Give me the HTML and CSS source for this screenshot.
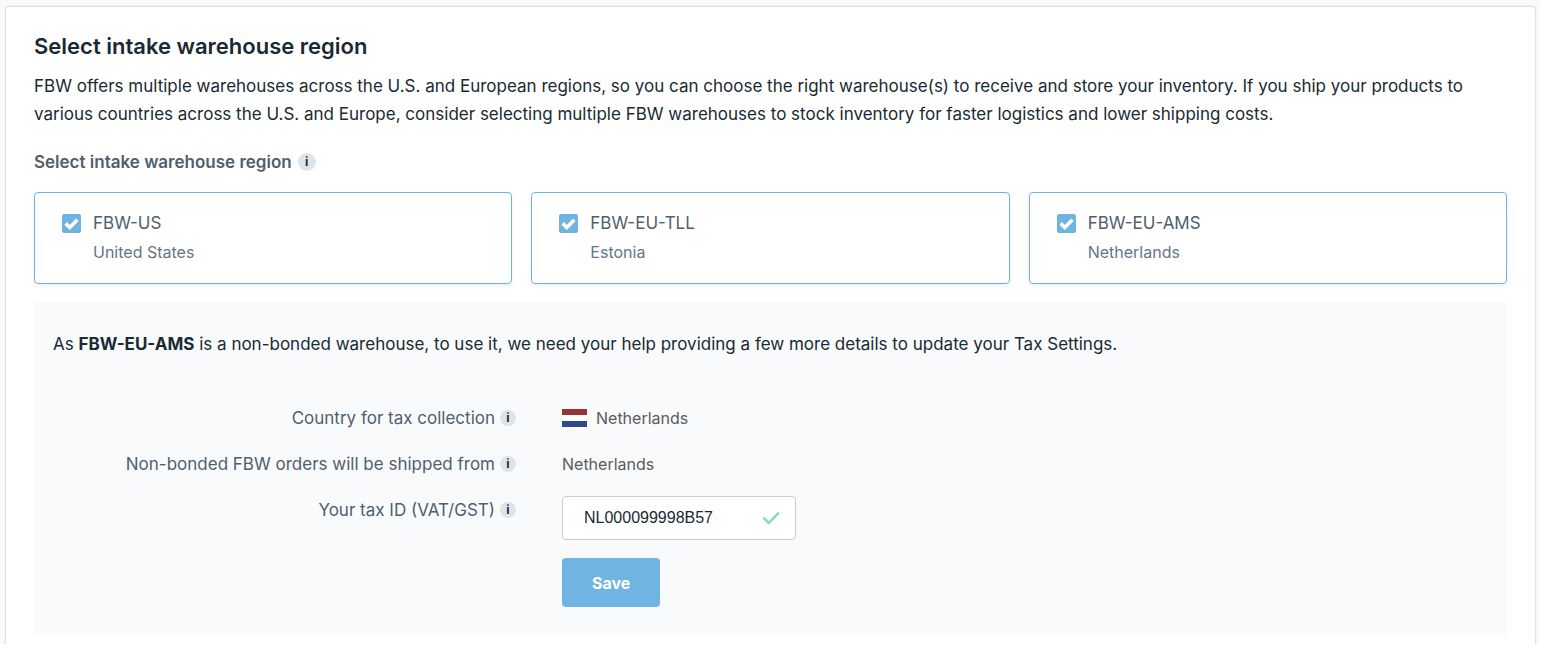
FILE: index.html
```html
<!DOCTYPE html>
<html lang="en">
<head>
    <meta charset="UTF-8">
    <meta name="viewport" content="width=device-width, initial-scale=1.0">
    <title>Select intake warehouse region</title>
    <link rel="stylesheet" href="styles.css">
</head>
<body>
    <main class="page">
        <section class="card">
            <h1 class="title">Select intake warehouse region</h1>
            <p class="intro">FBW offers multiple warehouses across the U.S. and European regions, so you can choose the right warehouse(s) to receive and store your inventory. If you ship your products to various countries across the U.S. and Europe, consider selecting multiple FBW warehouses to stock inventory for faster logistics and lower shipping costs.</p>

            <h2 class="subtitle">Select intake warehouse region <span class="info info-large">i</span></h2>
            <div class="regions">
                <label class="region">
                    <input type="checkbox" class="region-check" name="region" value="us" checked>
                    <span class="region-name">FBW-US</span>
                    <span class="region-country">United States</span>
                </label>
                <label class="region">
                    <input type="checkbox" class="region-check" name="region" value="tll" checked>
                    <span class="region-name">FBW-EU-TLL</span>
                    <span class="region-country">Estonia</span>
                </label>
                <label class="region">
                    <input type="checkbox" class="region-check" name="region" value="ams" checked>
                    <span class="region-name">FBW-EU-AMS</span>
                    <span class="region-country">Netherlands</span>
                </label>
            </div>

            <div class="tax">
                <p class="tax-note">As <b>FBW-EU-AMS</b> is a non-bonded warehouse, to use it, we need your help providing a few more details to update your Tax Settings.</p>
                <form action="#" class="tax-form">
                    <div class="tax-label">Country for tax collection <span class="info">i</span></div>
                    <div class="tax-value">
                        <svg class="flag" viewBox="0 0 25 18" aria-hidden="true">
                            <rect width="25" height="18" fill="#fff"/>
                            <rect width="25" height="6" fill="#953534"/>
                            <rect y="12" width="25" height="6" fill="#304988"/>
                        </svg>
                        Netherlands
                    </div>

                    <div class="tax-label">Non-bonded FBW orders will be shipped from <span class="info">i</span></div>
                    <div class="tax-value">Netherlands</div>

                    <div class="tax-label"><label for="tax-id">Your tax ID (VAT/GST)</label> <span class="info">i</span></div>
                    <div class="tax-field">
                        <input type="text" class="tax-input" id="tax-id" value="NL000099998B57">
                        <svg class="tick" viewBox="0 0 18 14" aria-hidden="true">
                            <path d="M1.2 6.6 6.8 12 16.8 1.6" fill="none" stroke="#84dfb1" stroke-width="2.6"/>
                        </svg>
                    </div>

                    <button type="submit" class="save">Save</button>
                </form>
            </div>
        </section>
    </main>
</body>
</html>
```
FILE: styles.css
```css
* {
    box-sizing: border-box;
}
body {
    margin: 0;
    background: #fff;
    color: #192a32;
    font-family: Inter, "Open Sans", sans-serif;
    font-size: 17px;
    line-height: 28px;
}
.page {
    margin-right: 4px;
    padding: 6px 4px 0 5px;
    background: #f8fafc;
}
.card {
    padding: 25px 28px 9px;
    background: #fff;
    border: 1px solid #dbe3e8;
    border-bottom: 0;
    border-radius: 4px 4px 0 0;
    box-shadow: 0 0 2px #dce4ea;
}
.title {
    margin: 0 0 12px;
    font-size: 22px;
    font-weight: 600;
    line-height: 28px;
}
.intro {
    margin: 0 0 20px;
}
.subtitle {
    display: flex;
    align-items: center;
    gap: 6px;
    margin: 0 0 16px;
    color: #4f5f6d;
    font-size: 17px;
    font-weight: 600;
}
.info {
    flex: none;
    width: 16px;
    height: 16px;
    border-radius: 50%;
    background: #dde5e9;
    color: #192a32;
    font-size: 12px;
    font-weight: 700;
    line-height: 16px;
    text-align: center;
}
.info-large {
    width: 18px;
    height: 18px;
    line-height: 18px;
}

/* warehouses */
.regions {
    display: grid;
    grid-template-columns: repeat(3, 1fr);
    gap: 19px;
    margin-bottom: 18px;
}
.region {
    display: grid;
    grid-template-columns: 19px 1fr;
    column-gap: 12px;
    align-items: center;
    padding: 16px 27px;
    border: 1px solid #6fb3e1;
    border-radius: 4px;
    box-shadow: 0 2px 4px rgba(60, 90, 120, .1);
    line-height: 29px;
    cursor: pointer;
}
.region-check {
    appearance: none;
    width: 19px;
    height: 19px;
    margin: 0;
    border: 1px solid #6fb3e1;
    border-radius: 2px;
    background: #fff;
}
.region-check:checked {
    background: #6fb3e1 url("data:image/svg+xml,%3Csvg xmlns='http://www.w3.org/2000/svg' viewBox='0 0 17 17'%3E%3Cpath d='M2.6 8.4 6.8 12.4 14.4 4.8' fill='none' stroke='white' stroke-width='3.6'/%3E%3C/svg%3E") center / 17px no-repeat;
}
.region-name {
    color: #4f5f6d;
}
.region-country {
    grid-column: 2;
    color: #657686;
    font-size: 16px;
}

/* tax settings */
.tax {
    padding: 28px 19px;
    background: #f8fafc;
}
.tax-note {
    margin: 0 0 46px;
}
.tax-form {
    display: grid;
    grid-template-columns: 463px 1fr;
    gap: 18px 46px;
}
.tax-label {
    display: flex;
    align-items: center;
    justify-content: flex-end;
    gap: 5px;
    height: 28px;
    color: #4f5f6d;
}
.tax-value {
    display: flex;
    align-items: center;
    gap: 9px;
    color: #5b5b5b;
    font-size: 16px;
}
.flag {
    width: 25px;
    height: 18px;
}
.tax-field {
    display: flex;
    align-items: center;
    width: 234px;
    height: 44px;
    padding: 0 15px 0 21px;
    border: 1px solid #c4cdd5;
    border-radius: 4px;
    background: #fff;
}
.tax-input {
    flex: 1;
    min-width: 0;
    padding: 0;
    border: 0;
    outline: 0;
    background: none;
    color: #192a32;
    font-family: "Liberation Sans", Arial, sans-serif;
    font-size: 16px;
}
.tick {
    width: 18px;
    height: 14px;
}
.save {
    grid-column: 2;
    justify-self: start;
    height: 49px;
    padding: 0 30px;
    border: 0;
    border-radius: 4px;
    background: #70b4e2;
    color: #fff;
    font-family: inherit;
    font-size: 16px;
    font-weight: 700;
    cursor: pointer;
}
```
